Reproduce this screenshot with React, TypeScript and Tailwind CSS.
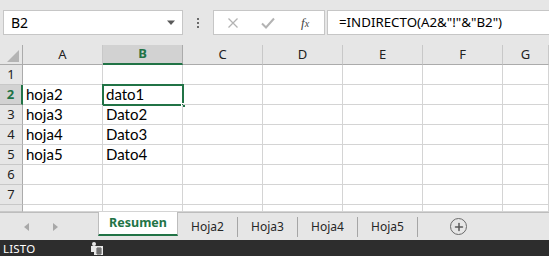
import { Plus } from "lucide-react";

const cols = ["A", "B", "C", "D", "E", "F", "G"];
const data: Record<number, [string, string]> = {
  2: ["hoja2", "dato1"],
  3: ["hoja3", "Dato2"],
  4: ["hoja4", "Dato3"],
  5: ["hoja5", "Dato4"],
};
const sheets = ["Hoja2", "Hoja3", "Hoja4", "Hoja5"];

const ui = { fontFamily: '"Noto Sans", "Open Sans", sans-serif' };
const cell = { fontFamily: 'Lato, "Liberation Sans", sans-serif' };

export default function App() {
  return (
    <div className="w-[549px] h-[256px] overflow-hidden bg-[#e6e6e6] flex flex-col select-none" style={ui}>
      {/* barra de fórmulas */}
      <div className="h-[45px] flex items-start pt-[10px] pl-[3px] shrink-0">
        <div className="w-[180px] h-[25px] bg-white border border-[#c6c6c6] flex items-center pl-[7px] pr-[6px] text-[14px] text-black">
          <span className="flex-1">B2</span>
          <svg width="10" height="6" viewBox="0 0 10 6"><path d="M1 0.5h8L5 5z" fill="#5a5a5a" /></svg>
        </div>
        <div className="w-[30px] h-[25px] flex flex-col items-center justify-center gap-[2px]">
          <span className="w-[2px] h-[2px] bg-[#6a6a6a]" />
          <span className="w-[2px] h-[2px] bg-[#6a6a6a]" />
          <span className="w-[2px] h-[2px] bg-[#6a6a6a]" />
        </div>
        <div className="w-[112px] h-[25px] bg-white border border-[#c6c6c6] flex items-center">
          <svg className="ml-[13px]" width="12" height="12" viewBox="0 0 12 12"><path d="M1.5 1.5l9 9M10.5 1.5l-9 9" stroke="#b3b3b3" strokeWidth="1.3" /></svg>
          <svg className="ml-[22px]" width="14" height="12" viewBox="0 0 14 12"><path d="M1 6.5l4 4L13 1.5" stroke="#b3b3b3" strokeWidth="2" fill="none" /></svg>
          <span className="ml-[26px] text-[13px] italic text-[#444]" style={{ fontFamily: '"Liberation Serif", serif' }}>
            f<span className="text-[10px]">x</span>
          </span>
        </div>
        <div className="ml-[2px] flex-1 h-[25px] bg-white border border-[#c6c6c6] border-r-0 flex items-center pl-[11px] text-[13.3px] text-black">
          =INDIRECTO(A2&amp;"!"&amp;"B2")
        </div>
      </div>

      {/* hoja */}
      <div className="grid grid-cols-[23px_80px_80px_80px_80px_80px_80px_1fr] grid-rows-[20px_repeat(7,20px)_7px] bg-white shrink-0">
        <div className="bg-[#e6e6e6] border-r border-b border-[#ababab] relative">
          <svg className="absolute right-[3px] bottom-[2px]" width="12" height="12" viewBox="0 0 12 12"><path d="M12 0v12H0z" fill="#b4b4b4" /></svg>
        </div>
        {cols.map((c) =>
          c === "B" ? (
            <div key={c} className="bg-[#d2d2d2] border-r border-[#ababab] border-b-2 border-b-[#217346] flex items-center justify-center text-[13px] font-bold text-[#217346]">
              {c}
            </div>
          ) : (
            <div key={c} className="bg-[#e6e6e6] border-r border-[#c8c8c8] border-b border-b-[#ababab] flex items-center justify-center text-[13px] text-[#222]">
              {c}
            </div>
          )
        )}
        {[1, 2, 3, 4, 5, 6, 7, 8].map((r) => (
          <Row key={r} r={r} />
        ))}
      </div>

      {/* pestañas */}
      <div className="h-[28px] shrink-0 border-t border-[#bdbdbd] flex items-start">
        <div className="w-[98px] h-[27px] flex items-center">
          <svg className="ml-[24px]" width="6" height="8" viewBox="0 0 6 8"><path d="M5 0v8L0 4z" fill="#a8a8a8" /></svg>
          <svg className="ml-[22px]" width="6" height="8" viewBox="0 0 6 8"><path d="M1 0v8L6 4z" fill="#a8a8a8" /></svg>
        </div>
        <div className="w-[80px] h-[24px] -mt-px bg-white border-x border-[#bdbdbd] border-b-2 border-b-[#217346] flex items-center justify-center text-[12.5px] font-bold text-[#217346]">
          Resumen
        </div>
        {sheets.map((s) => (
          <div key={s} className="w-[60px] h-[27px] flex items-center">
            <span className="flex-1 text-center text-[12px] text-[#262626]">{s}</span>
            <span className="w-px h-[20px] bg-[#a6a6a6]" />
          </div>
        ))}
        <div className="ml-[32px] h-[27px] flex items-center">
          <div className="w-[17px] h-[17px] rounded-full border-[1.5px] border-[#6a6a6a] flex items-center justify-center">
            <Plus size={12} strokeWidth={3} color="#5a5a5a" />
          </div>
        </div>
      </div>

      {/* barra de estado */}
      <div className="flex-1 bg-[#2d2d2d] flex items-center text-[11.5px] text-white pl-[3px]">
        <span className="w-[88px] tracking-[0.2px]">LISTO</span>
        <svg width="12" height="13" viewBox="0 0 12 13">
          <rect x="1" y="0" width="4" height="4" rx="2" fill="#e8e8e8" />
          <rect x="3" y="4" width="9" height="9" fill="#e8e8e8" />
          <path d="M5 7h6M5 9h6M5 11h6M7 5v8M9 5v8" stroke="#2d2d2d" strokeWidth="0.8" />
          <rect x="0" y="4" width="3" height="6" fill="#e8e8e8" />
        </svg>
      </div>
    </div>
  );
}

function Row({ r }: { r: number }) {
  const sel = r === 2;
  const vals = data[r] ?? ["", ""];
  return (
    <>
      <div
        className={
          sel
            ? "bg-[#d2d2d2] border-r-2 border-r-[#217346] border-b border-b-[#ababab] flex items-center justify-center text-[13px] font-bold text-[#217346]"
            : "bg-[#e6e6e6] border-r border-[#ababab] border-b border-b-[#c8c8c8] flex items-center justify-center text-[13px] text-[#222]"
        }
      >
        {r < 8 ? r : ""}
      </div>
      {cols.map((c, i) => (
        <div
          key={c}
          className="border-r border-b border-[#d4d4d4] flex items-end pl-[3px] pb-[1px] text-[15px] text-black leading-[18px] relative"
          style={cell}
        >
          {i < 2 ? vals[i] : ""}
          {sel && c === "B" && (
            <div className="absolute -left-px -top-px w-[82px] h-[22px] border-2 border-[#217346]">
              <span className="absolute -right-[4px] -bottom-[4px] w-[5px] h-[5px] bg-[#217346] border border-white" />
            </div>
          )}
        </div>
      ))}
    </>
  );
}
